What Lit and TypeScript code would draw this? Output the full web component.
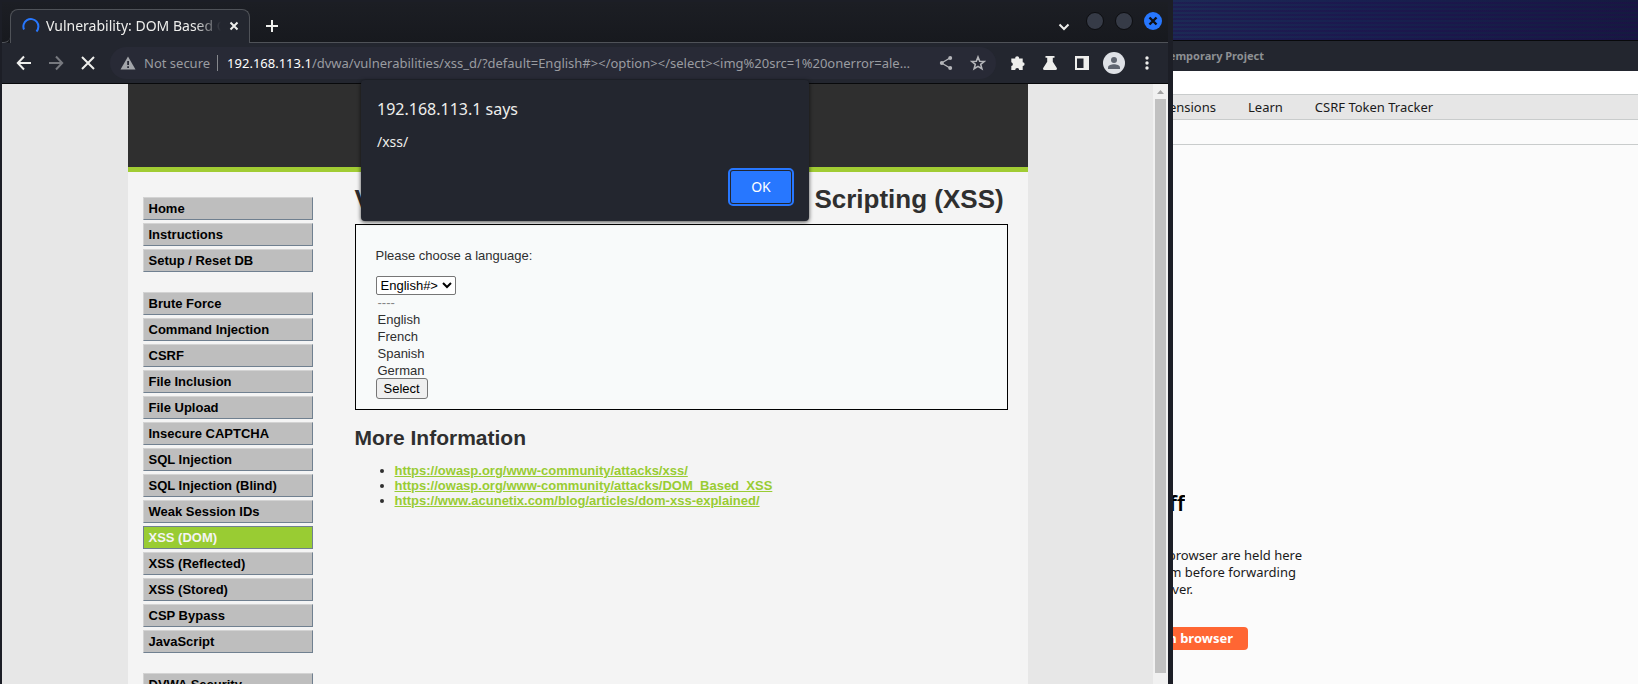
import { LitElement, html, css } from "lit";
import { customElement } from "lit/decorators.js";
import { classMap } from "lit/directives/class-map.js";

const uiFont = css`"Noto Sans", "Open Sans", sans-serif`;

@customElement("chrome-toolbar")
class ChromeToolbar extends LitElement {
  static styles = css`
    :host {
      display: block;
      font-family: ${uiFont};
      color: #eeeeec;
    }
    button {
      appearance: none;
      border: 0;
      padding: 0;
      margin: 0;
      background: none;
      color: inherit;
      display: flex;
      align-items: center;
      justify-content: center;
      flex: none;
    }
    svg {
      display: block;
      flex: none;
    }
    .strip {
      display: flex;
      height: 41px;
      background: linear-gradient(#1c1e24, #17191e);
    }
    .lead {
      width: 8px;
      box-sizing: border-box;
      border-bottom: 1px solid #4f5258;
      border-bottom-right-radius: 6px;
    }
    .tab {
      box-sizing: border-box;
      width: 240px;
      margin-top: 7px;
      padding: 0 8px 2px 11px;
      border: 1px solid #4f5258;
      border-bottom: 0;
      border-radius: 8px 8px 0 0;
      background: #23262f;
      display: flex;
      align-items: center;
      gap: 6px;
    }
    .title {
      flex: 1;
      min-width: 0;
      overflow: hidden;
      white-space: nowrap;
      font-size: 14px;
      line-height: 20px;
      mask-image: linear-gradient(90deg, #000 85%, transparent 100%);
    }
    .rest {
      flex: 1;
      border-bottom: 1px solid #4f5258;
      display: flex;
      align-items: center;
    }
    .plus {
      width: 24px;
      margin-left: 10px;
      padding-top: 7px;
    }
    .spacer {
      flex: 1;
    }
    .chev {
      padding-top: 9px;
      margin-right: 6px;
      width: 32px;
    }
    .controls {
      display: flex;
      gap: 11px;
      padding: 0 6px 3px 0;
    }
    .ctl {
      width: 18px;
      height: 18px;
      border-radius: 50%;
      box-sizing: border-box;
      border: 1px solid #0c0d10;
      background: #363b47;
    }
    .ctl.close {
      background: #2777ff;
      border: 0;
      color: #0e1015;
    }
    .bar {
      height: 40px;
      display: flex;
      align-items: center;
      background: #23262f;
      border-bottom: 1px solid #08090b;
      padding-left: 6px;
    }
    .nav {
      width: 32px;
      height: 32px;
    }
    .nav.off {
      color: #77797f;
    }
    .omni {
      flex: 1;
      min-width: 0;
      height: 32px;
      margin: 0 6px;
      border-radius: 16px;
      background: #282a36;
      display: flex;
      align-items: center;
      color: #9a9ca1;
      font-size: 13px;
    }
    .warn {
      margin: 0 8px 0 10px;
    }
    .insecure {
      white-space: nowrap;
    }
    .sep {
      width: 1px;
      height: 16px;
      background: #85878c;
      margin: 0 9px 0 7px;
    }
    .url {
      flex: 1;
      min-width: 0;
      overflow: hidden;
      text-overflow: ellipsis;
      white-space: nowrap;
      line-height: 20px;
    }
    .host {
      color: #fff;
    }
    .omni .act {
      width: 32px;
      color: #b5b6ba;
    }
    .omni .share {
      margin-left: 16px;
    }
    .omni .star {
      margin-right: 2px;
    }
    .menu {
      margin: 0 5px 0 1px;
    }
  `;

  render() {
    return html`
      <div class="strip">
        <div class="lead"></div>
        <div class="tab">
          <svg width="18" height="18" viewBox="0 0 18 18" fill="none" stroke="#2777ff" stroke-width="2">
            <path d="M2 12.5A7.5 7.5 0 1 1 14.5 14.5" />
          </svg>
          <span class="title">Vulnerability: DOM Based Cross</span>
          <button aria-label="Close tab">
            <svg width="14" height="14" viewBox="0 0 14 14" stroke="currentColor" stroke-width="2">
              <path d="M3.500 3.500l7 7M10.500 3.500l-7 7" />
            </svg>
          </button>
        </div>
        <div class="rest">
          <button class="plus" aria-label="New tab">
            <svg width="14" height="14" viewBox="0 0 14 14" stroke="currentColor" stroke-width="2">
              <path d="M7 1v12M1 7h12" />
            </svg>
          </button>
          <span class="spacer"></span>
          <button class="chev" aria-label="Search tabs">
            <svg width="12" height="12" viewBox="0 0 12 12" fill="none" stroke="currentColor" stroke-width="2">
              <path d="M1.500 3.500L6 8l4.500-4.500" />
            </svg>
          </button>
          <div class="controls">
            <button class="ctl" aria-label="Minimize"></button>
            <button class="ctl" aria-label="Maximize"></button>
            <button class="ctl close" aria-label="Close">
              <svg width="10" height="10" viewBox="0 0 10 10" stroke="currentColor" stroke-width="2.400">
                <path d="M1.500 1.500l7 7M8.500 1.500l-7 7" />
              </svg>
            </button>
          </div>
        </div>
      </div>
      <div class="bar">
        <button class="nav" aria-label="Back">
          <svg width="16" height="16" viewBox="0 0 16 16" fill="none" stroke="currentColor" stroke-width="2">
            <path d="M15 8H2.500M8 1.500L1.800 8 8 14.500" />
          </svg>
        </button>
        <button class="nav off" aria-label="Forward">
          <svg width="16" height="16" viewBox="0 0 16 16" fill="none" stroke="currentColor" stroke-width="2">
            <path d="M1 8h12.500M8 1.500L14.200 8 8 14.500" />
          </svg>
        </button>
        <button class="nav" aria-label="Stop">
          <svg width="14" height="14" viewBox="0 0 14 14" stroke="currentColor" stroke-width="2">
            <path d="M1 1l12 12M13 1L1 13" />
          </svg>
        </button>
        <div class="omni">
          <svg class="warn" width="16" height="16" viewBox="0 0 16 16">
            <path d="M8 1.500L15.500 14.500H.5z" fill="#a3a5aa" />
            <path d="M7.200 6h1.800v4H7.200zM7.200 11.200h1.800V13H7.200z" fill="#282a36" />
          </svg>
          <span class="insecure">Not secure</span>
          <span class="sep"></span>
          <span class="url"
            ><span class="host">192.168.113.1</span
            >/dvwa/vulnerabilities/xss_d/?default=English#&gt;&lt;/option&gt;&lt;/select&gt;&lt;img%20src=1%20onerror=ale…</span
          >
          <button class="act share" aria-label="Share">
            <svg width="16" height="16" viewBox="0 0 16 16" fill="currentColor">
              <path d="M3.500 8L12 3M3.500 8L12 13" stroke="currentColor" stroke-width="1.400" />
              <circle cx="3.800" cy="8" r="2" />
              <circle cx="12.200" cy="3" r="2" />
              <circle cx="12.200" cy="13" r="2" />
            </svg>
          </button>
          <button class="act star" aria-label="Bookmark">
            <svg width="16" height="16" viewBox="0 0 16 16" fill="none" stroke="currentColor" stroke-width="1.600">
              <path d="M8 2l1.700 4.200 4.500.300-3.500 2.900 1.200 4.400L8 11.400l-3.900 2.400 1.200-4.400L1.800 6.500l4.500-.3z" />
            </svg>
          </button>
        </div>
        <button class="nav" aria-label="Extensions">
          <svg width="16" height="16" viewBox="0 0 16 16" fill="currentColor">
            <path d="M1.300 3.500h4a1.900 1.900 0 1 1 3.700 0h3.700v3.700a1.900 1.900 0 1 1 0 3.800v4H9.200a2 2 0 0 0-4 0H1.300v-3.900a2 2 0 0 0 0-3.900z" />
          </svg>
        </button>
        <button class="nav" aria-label="Experiments">
          <svg width="16" height="16" viewBox="0 0 16 16" fill="currentColor">
            <path d="M3.500 1h9v1.800h-1.700v4L14.800 13c.5 1-.1 2-1.200 2H2.400c-1.100 0-1.700-1-1.200-2l4-6.200v-4H3.500z" />
          </svg>
        </button>
        <button class="nav" aria-label="Side panel">
          <svg width="16" height="16" viewBox="0 0 16 16">
            <path fill="currentColor" fill-rule="evenodd" d="M1 1h14v14H1zM3 3.500v9.500h6.500V3.500z" />
          </svg>
        </button>
        <button class="nav" aria-label="Profile">
          <svg width="22" height="22" viewBox="0 0 22 22">
            <circle cx="11" cy="11" r="11" fill="#dee1e6" />
            <circle cx="11" cy="8" r="3" fill="#5f6570" />
            <path d="M5 17v-1.500c0-2.200 3.500-3.200 6-3.200s6 1 6 3.200V17z" fill="#5f6570" />
          </svg>
        </button>
        <button class="nav menu" aria-label="Menu">
          <svg width="16" height="16" viewBox="0 0 16 16" fill="currentColor">
            <circle cx="8" cy="3" r="1.700" />
            <circle cx="8" cy="8" r="1.700" />
            <circle cx="8" cy="13" r="1.700" />
          </svg>
        </button>
      </div>
    `;
  }
}

@customElement("dvwa-page")
class DvwaPage extends LitElement {
  static styles = css`
    :host {
      display: flex;
      overflow: hidden;
      background: #e7e7e7;
      font-family: "Liberation Sans", Arial, sans-serif;
      font-size: 13px;
      color: #2f2f2f;
    }
    .view {
      flex: 1;
      min-width: 0;
      display: flex;
      justify-content: center;
    }
    .container {
      width: 900px;
      background: #f4f4f4;
    }
    .header {
      height: 83px;
      background: #2f2f2f;
      border-bottom: 5px solid #a1cc33;
    }
    .columns {
      display: grid;
      grid-template-columns: 170px 1fr;
      gap: 42px;
      padding: 0 20px 0 15px;
    }
    .nav {
      padding-top: 25px;
    }
    .nav ul {
      list-style: none;
      margin: 0 0 20px;
      padding: 0;
      display: grid;
      gap: 3px;
    }
    .nav a {
      display: block;
      box-sizing: border-box;
      height: 23px;
      padding-left: 5px;
      line-height: 21px;
      border: 1px solid;
      border-color: #d3d3d3 #708090 #708090 #d3d3d3;
      background: #bebebe;
      color: #000;
      font-weight: bold;
      text-decoration: none;
    }
    .nav a.on {
      background: #9c3;
      border-color: #708090;
      color: #f4f4f4;
    }
    h1 {
      font-size: 26px;
      line-height: 30px;
      margin: 12px 0 10px;
      white-space: nowrap;
    }
    h2 {
      font-size: 21px;
      line-height: 24px;
      margin: 16px 0 13px;
    }
    .box {
      border: 1px solid #000;
      background: #f8fafa;
      padding: 22px 20px 10px;
    }
    .box label {
      display: block;
      line-height: 18px;
      margin-bottom: 11px;
    }
    select {
      display: block;
      height: 19px;
      font: 13px "Liberation Sans", Arial, sans-serif;
      color: #000;
      background: #fff;
      border: 1px solid #767676;
      border-radius: 2px;
    }
    .opts {
      list-style: none;
      margin: 0;
      padding: 0 2px;
      line-height: 17px;
      height: 83px;
    }
    .opts .mute {
      color: #858585;
      line-height: 16px;
    }
    .send {
      display: block;
      height: 21px;
      padding: 0 7px;
      font: 13px "Liberation Sans", Arial, sans-serif;
      color: #000;
      background: #efefef;
      border: 1px solid #767676;
      border-radius: 3px;
    }
    .links {
      margin: 0;
      padding-left: 40px;
      line-height: 15px;
    }
    .links a {
      color: #9c3;
      font-weight: bold;
    }
    .scroll {
      width: 15px;
      box-sizing: border-box;
      background: #f1f1f1;
      display: flex;
      flex-direction: column;
      align-items: center;
      padding-bottom: 11px;
    }
    .up {
      width: 7px;
      height: 4px;
      margin: 6px 0 5px;
      background: #a3a3a3;
      clip-path: polygon(50% 0, 100% 100%, 0 100%);
    }
    .thumb {
      flex: 1;
      width: 11px;
      background: #c1c1c1;
    }
  `;

  private groups = [
    ["Home", "Instructions", "Setup / Reset DB"],
    [
      "Brute Force",
      "Command Injection",
      "CSRF",
      "File Inclusion",
      "File Upload",
      "Insecure CAPTCHA",
      "SQL Injection",
      "SQL Injection (Blind)",
      "Weak Session IDs",
      "XSS (DOM)",
      "XSS (Reflected)",
      "XSS (Stored)",
      "CSP Bypass",
      "JavaScript",
    ],
    ["DVWA Security"],
  ];

  private links = [
    "https://owasp.org/www-community/attacks/xss/",
    "https://owasp.org/www-community/attacks/DOM_Based_XSS",
    "https://www.acunetix.com/blog/articles/dom-xss-explained/",
  ];

  render() {
    return html`
      <div class="view">
        <div class="container">
          <div class="header"></div>
          <div class="columns">
            <nav class="nav">
              ${this.groups.map(
                (g) => html`<ul>
                  ${g.map(
                    (t) =>
                      html`<li><a href="#" class=${classMap({ on: t === "XSS (DOM)" })}>${t}</a></li>`
                  )}
                </ul>`
              )}
            </nav>
            <main>
              <h1>Vulnerability: DOM Based Cross Site Scripting (XSS)</h1>
              <div class="box">
                <label for="lang">Please choose a language:</label>
                <select id="lang">
                  <option>English#&gt;</option>
                </select>
                <ul class="opts">
                  <li class="mute">----</li>
                  <li>English</li>
                  <li>French</li>
                  <li>Spanish</li>
                  <li>German</li>
                </ul>
                <button class="send">Select</button>
              </div>
              <h2>More Information</h2>
              <ul class="links">
                ${this.links.map((l) => html`<li><a href=${l}>${l}</a></li>`)}
              </ul>
            </main>
          </div>
        </div>
      </div>
      <div class="scroll">
        <span class="up"></span>
        <span class="thumb"></span>
      </div>
    `;
  }
}

@customElement("burp-window")
class BurpWindow extends LitElement {
  static styles = css`
    :host {
      display: flex;
      flex-direction: column;
      overflow: hidden;
      font-family: ${uiFont};
      font-size: 13px;
      color: #1a1a1a;
      background: #fbfbfb;
    }
    .wall {
      flex: none;
      height: 40px;
      background: repeating-linear-gradient(transparent 0 2px, rgba(35, 8, 75, 0.35) 2px 4px),
        linear-gradient(90deg, #1c2a55, #182050 40%, #151a40);
      border-bottom: 1px solid #08090b;
    }
    .cut {
      display: flex;
      justify-content: flex-end;
      overflow-x: clip;
      overflow-y: visible;
      white-space: nowrap;
    }
    .title {
      height: 30px;
      background: #23262f;
      color: #8d9093;
      font-size: 11px;
      font-weight: 700;
      line-height: 30px;
    }
    .title .cut {
      width: 91px;
    }
    .menubar {
      height: 23px;
      background: #fff;
    }
    .tabs {
      display: flex;
      gap: 32px;
      height: 24px;
      line-height: 24px;
      background: #e6e6e6;
      border: solid #c9cccc;
      border-width: 1px 0;
    }
    .tabs a {
      color: inherit;
      text-decoration: none;
      white-space: nowrap;
    }
    .tabs .cut {
      width: 43px;
    }
    .subtabs {
      height: 24px;
      border-bottom: 1px solid #c9cccc;
    }
    .content {
      padding-top: 343px;
    }
    h2 {
      margin: 0 0 31px;
      width: 12px;
      font-size: 22px;
      line-height: 28px;
      font-weight: 600;
      color: #000;
    }
    .l1 {
      width: 129px;
    }
    .l2 {
      width: 123px;
    }
    .l3 {
      width: 20px;
    }
    .line {
      line-height: 17px;
    }
    .open {
      margin-top: 29px;
      width: 75px;
      height: 23px;
      box-sizing: border-box;
      padding: 0 15px 0 0;
      border: 0;
      border-radius: 0 4px 4px 0;
      background: #f63;
      color: #fff;
      font: 700 13px/23px ${uiFont};
    }
  `;

  render() {
    return html`
      <div class="wall"></div>
      <div class="title"><div class="cut">Temporary Project</div></div>
      <div class="menubar"></div>
      <nav class="tabs">
        <a class="cut" href="#">Extensions</a>
        <a href="#">Learn</a>
        <a href="#">CSRF Token Tracker</a>
      </nav>
      <div class="subtabs"></div>
      <div class="content">
        <h2 class="cut">off</h2>
        <div class="line cut l1">browser are held here</div>
        <div class="line cut l2">them before forwarding</div>
        <div class="line cut l3">server.</div>
        <button class="open cut">Open browser</button>
      </div>
    `;
  }
}

@customElement("app-root")
class AppRoot extends LitElement {
  static styles = css`
    :host {
      display: grid;
      grid-template-columns: 1173fr 465fr;
      height: 100vh;
      overflow: hidden;
    }
    .browser {
      position: relative;
      display: flex;
      flex-direction: column;
      min-width: 0;
      min-height: 0;
      background: #1c1e26;
      border: solid #1c1e26;
      border-width: 2px 5px 0 2px;
    }
    dvwa-page {
      flex: 1;
      min-height: 0;
    }
    burp-window {
      min-width: 0;
      min-height: 0;
    }
    .dialog {
      position: absolute;
      top: 78px;
      left: 50%;
      width: 448px;
      margin-left: -224px;
      box-sizing: border-box;
      height: 141px;
      padding: 17px 18px 18px 16px;
      border-radius: 4px;
      background: #23262f;
      box-shadow: 0 1px 4px rgba(0, 0, 0, 0.7);
      color: #eeeeec;
      font-family: ${uiFont};
      display: flex;
      flex-direction: column;
    }
    .dialog h2 {
      margin: 0 0 9px;
      font-size: 16px;
      font-weight: 400;
      line-height: 24px;
    }
    .dialog p {
      margin: 0;
      font-size: 14px;
      line-height: 24px;
    }
    .ok {
      margin-top: auto;
      align-self: flex-end;
      width: 60px;
      height: 32px;
      flex: none;
      border: 0;
      padding: 0 0 2px;
      border-radius: 2px;
      background: #2777ff;
      color: #fff;
      font: 14px ${uiFont};
      outline: 2px solid #2777ff;
      outline-offset: 1px;
    }
  `;

  render() {
    return html`
      <section class="browser">
        <chrome-toolbar></chrome-toolbar>
        <dvwa-page></dvwa-page>
        <div class="dialog" role="dialog" aria-labelledby="says">
          <h2 id="says">192.168.113.1 says</h2>
          <p>/xss/</p>
          <button class="ok">OK</button>
        </div>
      </section>
      <burp-window></burp-window>
    `;
  }
}
